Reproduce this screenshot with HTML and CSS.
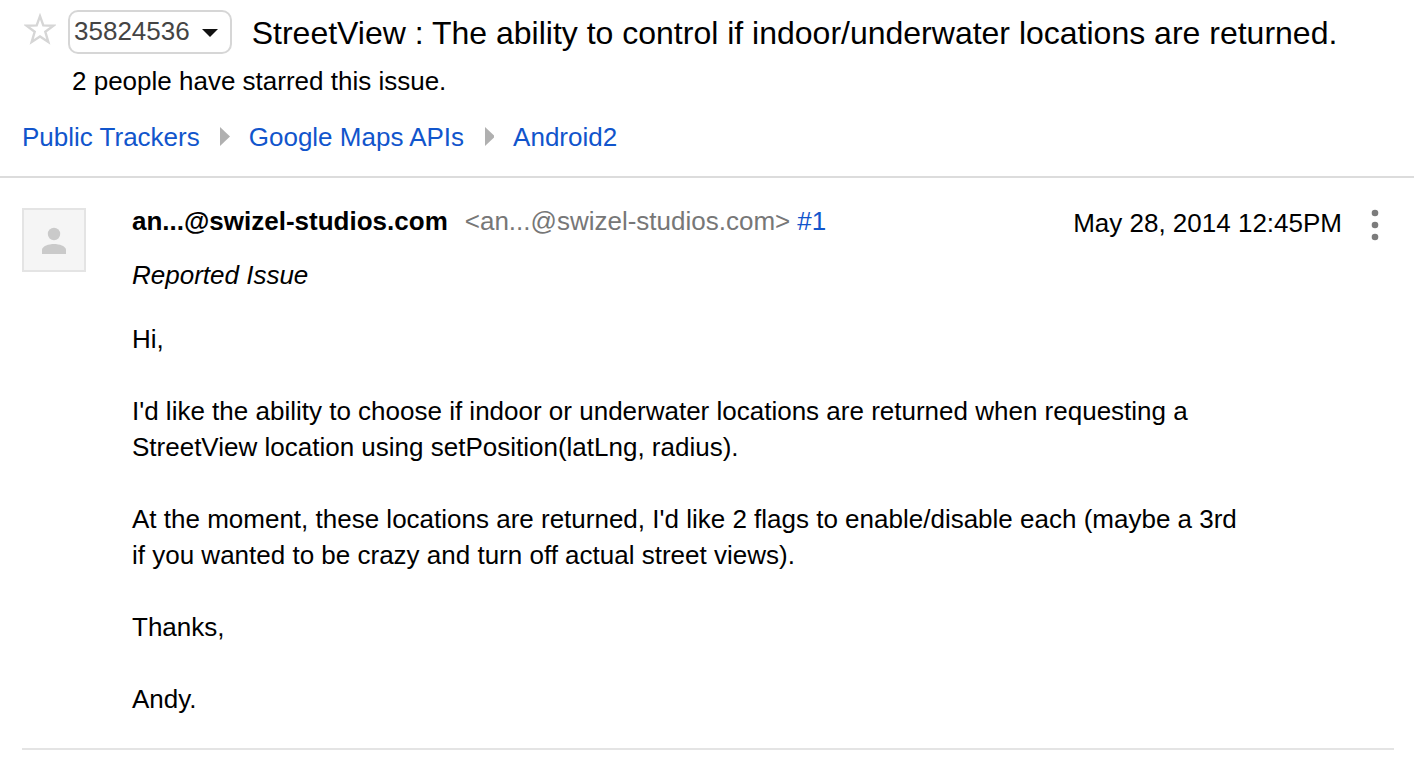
FILE: index.html
```html
<!DOCTYPE html>
<html lang="en">
<head>
<meta charset="utf-8">
<title>StreetView : The ability to control if indoor/underwater locations are returned.</title>
<link rel="stylesheet" href="styles.css">
</head>
<body>
<header class="issue-header">
  <div class="title-row">
    <button class="star" type="button" aria-label="Star this issue"><svg viewBox="0 0 32 32" width="32" height="32"><path d="M16 3.200l3.300 9.200 10.200.3-8.200 6.100 3 10.200L16 23.400l-8.300 5.600 3-10.200-8.200-6.100 10.200-.3z" fill="none" stroke="#d6d6d6" stroke-width="2.400"/></svg></button>
    <button class="issue-id" type="button">35824536<svg viewBox="0 0 16 12" width="16" height="12" aria-hidden="true"><path d="M0 4h16l-8 8z" fill="#111"/></svg></button>
    <h1 class="title">StreetView : The ability to control if indoor/underwater locations are returned.</h1>
  </div>
  <p class="starred">2 people have starred this issue.</p>
  <nav class="crumbs" aria-label="Breadcrumb">
    <a href="#trackers">Public Trackers</a>
    <svg class="sep" viewBox="0 0 11 20" width="11" height="20" aria-hidden="true"><path d="M1 0l10 9.500L1 19z" fill="#b0b0b0"/></svg>
    <a href="#maps">Google Maps APIs</a>
    <svg class="sep" viewBox="0 0 11 20" width="11" height="20" aria-hidden="true"><path d="M2 0l10 9.500L2 19z" fill="#b0b0b0"/></svg>
    <a href="#android">Android2</a>
  </nav>
</header>
<main class="thread">
  <article class="comment">
    <div class="avatar"><svg viewBox="0 0 26 28" width="26" height="28" aria-hidden="true"><circle cx="13" cy="8" r="6.200" fill="#cacaca"/><path d="M1 28v-4c0-4 7-6 12-6s12 2 12 6v4z" fill="#cacaca"/></svg></div>
    <div class="content">
      <div class="byline">
        <div class="author"><strong>an...@swizel-studios.com</strong><span class="email">&lt;an...@swizel-studios.com&gt;</span><a href="#1">#1</a></div>
        <div class="meta">
          <time datetime="2014-05-28T12:45">May 28, 2014 12:45PM</time>
          <button class="more" type="button" aria-label="More actions"><svg viewBox="0 0 8 32" width="8" height="32"><g fill="#7c7c7c"><circle cx="4" cy="4" r="3.300"/><circle cx="4" cy="16" r="3.300"/><circle cx="4" cy="28" r="3.300"/></g></svg></button>
        </div>
      </div>
      <p class="kind">Reported Issue</p>
      <div class="body">
        <p>Hi,</p>
        <p>I'd like the ability to choose if indoor or underwater locations are returned when requesting a StreetView location using setPosition(latLng, radius).</p>
        <p>At the moment, these locations are returned, I'd like 2 flags to enable/disable each (maybe a 3rd if you wanted to be crazy and turn off actual street views).</p>
        <p>Thanks,</p>
        <p>Andy.</p>
      </div>
    </div>
  </article>
</main>
</body>
</html>
```
FILE: styles.css
```css
* { box-sizing: border-box; }
body {
  margin: 0;
  background: #fff;
  color: #000;
  font: 26px/36px "Liberation Sans", Arial, sans-serif;
}
p, h1 { margin: 0; }
a { color: #1155cc; text-decoration: none; }
svg { display: block; }
button { padding: 0; border: 0; background: none; color: inherit; font: inherit; }
.issue-header { padding: 10px 22px 21px; border-bottom: 2px solid #dcdcdc; }
.title-row { display: flex; align-items: flex-start; }
.star { margin: 3px 12px 0 2px; }
.issue-id {
  display: flex;
  align-items: center;
  gap: 12px;
  height: 44px;
  padding: 0 12px 2px 4px;
  border: 2px solid #d6d6d6;
  border-radius: 10px;
  color: #444;
}
.title { margin-left: 20px; font-size: 32px; font-weight: 400; line-height: 46px; }
.starred { padding: 7px 0 0 50px; }
.crumbs { display: flex; align-items: center; gap: 19px; margin-top: 20px; }
.thread { padding: 25px 20px 0 22px; }
.comment { display: flex; gap: 46px; padding-bottom: 31px; border-bottom: 2px solid #e4e4e4; }
.avatar {
  display: grid;
  place-items: center;
  flex: none;
  width: 64px;
  height: 64px;
  margin-top: 5px;
  border: 2px solid #e4e4e4;
  background: #f5f5f5;
}
.content { flex: 1; }
.byline { display: flex; align-items: flex-start; }
.author { flex: 1; }
.email { margin: 0 7px 0 17px; color: #777; }
.meta { display: flex; align-items: center; margin-top: 2px; }
.more { margin: 4px 15px 0 29px; }
.kind { margin-top: 16px; font-style: italic; }
.body { display: grid; gap: 36px; max-width: 1120px; margin-top: 28px; }
```
